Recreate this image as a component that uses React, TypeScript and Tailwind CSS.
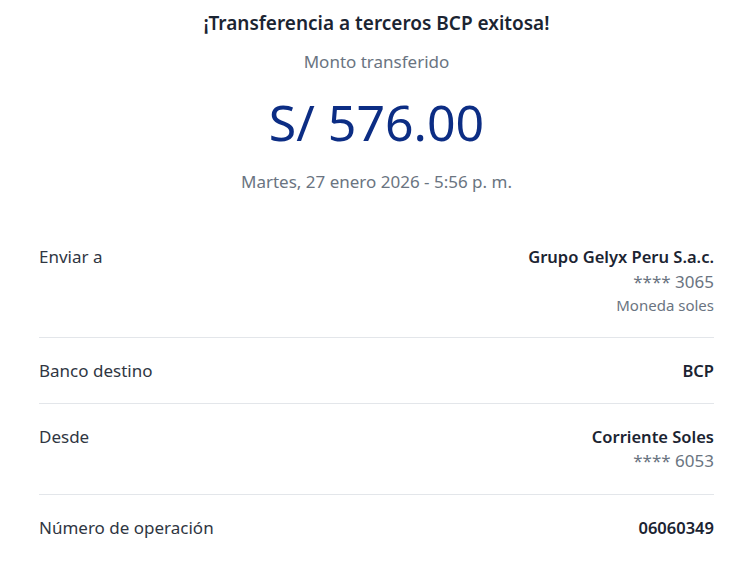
import React from "react";

const font = { fontFamily: '"Noto Sans", "Open Sans", sans-serif' };

function Row({
  label,
  children,
  last,
  pb = "pb-[21px]",
}: {
  label: string;
  children: React.ReactNode;
  last?: boolean;
  pb?: string;
}) {
  return (
    <div
      className={`flex justify-between items-start pt-[21px] ${pb} ${
        last ? "" : "border-b border-[#e3e6ea]"
      }`}
    >
      <div className="text-[17px] leading-[24px] text-[#2f3642]">{label}</div>
      <div className="flex flex-col items-end text-right">{children}</div>
    </div>
  );
}

export default function App() {
  return (
    <div className="w-[742px] h-[562px] bg-white overflow-hidden" style={font}>
      <div className="pl-[39px] pr-[28px] pt-[10px]">
        <div className="flex flex-col items-center">
          <div className="text-[19px] leading-[26px] font-semibold text-[#1b2432]">
            ¡Transferencia a terceros BCP exitosa!
          </div>
          <div className="mt-[14px] text-[17px] leading-[24px] text-[#6a7481]">
            Monto transferido
          </div>
          <div className="mt-[18px] text-[50px] leading-[60px] text-[#0c2d84]">
            S/ 576.00
          </div>
          <div className="mt-[18px] text-[17px] leading-[24px] text-[#6a7481]">
            Martes, 27 enero 2026 - 5:56 p. m.
          </div>
        </div>
        <div className="mt-[51px] flex flex-col">
          <div className="flex justify-between items-start pb-[21px] border-b border-[#e3e6ea]">
            <div className="text-[17px] leading-[24px] text-[#2f3642]">Enviar a</div>
            <div className="flex flex-col items-end text-right">
              <div className="text-[16.5px] leading-[24px] font-semibold text-[#1b2432]">
                Grupo Gelyx Peru S.a.c.
              </div>
              <div className="text-[17px] leading-[25px] text-[#6a7481]">**** 3065</div>
              <div className="text-[15px] leading-[22px] text-[#6a7481]">Moneda soles</div>
            </div>
          </div>
          <Row label="Banco destino" pb="pb-[20px]">
            <div className="text-[16.5px] leading-[24px] font-semibold text-[#1b2432]">BCP</div>
          </Row>
          <Row label="Desde">
            <div className="text-[16.5px] leading-[24px] font-semibold text-[#1b2432]">
              Corriente Soles
            </div>
            <div className="text-[17px] leading-[24px] text-[#6a7481]">**** 6053</div>
          </Row>
          <Row label="Número de operación" last>
            <div className="text-[16.5px] leading-[24px] font-semibold text-[#1b2432]">06060349</div>
          </Row>
        </div>
      </div>
    </div>
  );
}
